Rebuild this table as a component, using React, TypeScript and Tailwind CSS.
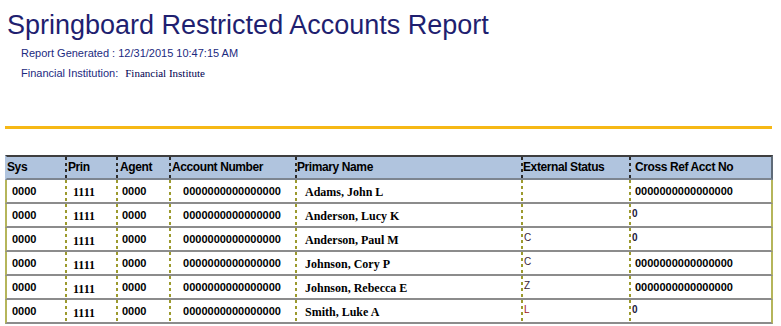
const rows = [
  { name: "Adams, John L", status: "", cross: "0000000000000000" },
  { name: "Anderson, Lucy K", status: "", cross: "0" },
  { name: "Anderson, Paul M", status: "C", cross: "0" },
  { name: "Johnson, Cory P", status: "C", cross: "0000000000000000" },
  { name: "Johnson, Rebecca E", status: "Z", cross: "0000000000000000" },
  { name: "Smith, Luke A", status: "L", cross: "0" },
];

// dashed column rule drawn as a 2px background strip on the cell's left edge
const olive =
  "bg-[repeating-linear-gradient(to_bottom,#9c9a2e_0px,#9c9a2e_3px,transparent_3px,transparent_6px)] bg-no-repeat bg-[length:2px_100%]";
const dark =
  "bg-[repeating-linear-gradient(to_bottom,#2b2b2b_0px,#2b2b2b_3px,transparent_3px,transparent_6px)] bg-no-repeat bg-[length:2px_100%]";

const sans = "font-['Liberation_Sans',Arial,sans-serif]";
const serif = "font-['Liberation_Serif','Times_New_Roman',serif]";

export default function App() {
  return (
    <div className={`min-h-screen w-[781px] bg-white pt-[12px] ${sans}`}>
      {/* Title */}
      <h1 className="ml-[7px] h-[27px] text-[27px] leading-[27px] text-[#1f1f70]">
        Springboard Restricted Accounts Report
      </h1>

      <div className="mt-[4px] pl-[21px] text-[11px] leading-[20px] text-[#1c2a80]">
        <div className="h-[20px]">Report Generated : 12/31/2015 10:47:15 AM</div>
        <div className="flex h-[20px]">
          <span>Financial Institution:</span>
          <span className={`ml-[7px] text-[11px] text-[#000050] ${serif}`}>
            Financial Institute
          </span>
        </div>
      </div>

      {/* Orange rule */}
      <div className="ml-[5px] mt-[43px] h-[3px] w-[767px] bg-[#f6b816]" />

      {/* Table */}
      <div className="ml-[5px] mt-[26px] w-[768px]">
        <div className="flex h-[25px] border-t-2 border-b-2 border-l-2 border-r-2 border-t-[#3e3e3e] border-b-[#7d8590] border-l-[#b0c4de] border-r-[#5f6b78] bg-[#b0c4de] text-[12px] font-bold tracking-[-0.4px] text-black">
          <div className="flex w-[58px] items-start pt-[1px]">Sys</div>
          <div className={`flex w-[51px] items-start pl-[3px] pt-[1px] ${dark}`}>Prin</div>
          <div className={`flex w-[53px] items-start pl-[4px] pt-[1px] ${dark}`}>Agent</div>
          <div className={`flex w-[126px] items-start pl-[3px] pt-[1px] ${dark}`}>Account Number</div>
          <div className={`flex w-[226px] items-start pl-[2px] pt-[1px] ${dark}`}>Primary Name</div>
          <div className={`flex w-[108px] items-start pl-[2px] pt-[1px] ${dark}`}>External Status</div>
          <div className={`flex w-[142px] items-start pl-[6px] pt-[1px] ${dark}`}>Cross Ref Acct No</div>
        </div>

        {rows.map((r, i) => (
          <div
            key={r.name}
            className="flex h-[24px] border-b-2 border-l-2 border-r-2 border-b-[#8c8c8c] border-l-[#b5b55a] border-r-[#b5b55a] bg-white text-black"
          >
            <div className="flex w-[58px] items-center pl-[5px] text-[11px] font-bold">0000</div>
            <div
              className={`flex w-[51px] items-center pl-[8px] text-[12px] font-bold ${
                i > 1 ? "pt-[4px]" : "pt-[2px]"
              } ${serif} ${olive}`}
            >
              1111
            </div>
            <div className={`flex w-[53px] items-center pl-[6px] text-[11px] font-bold ${olive}`}>0000</div>
            <div className={`flex w-[126px] items-center justify-center text-[11px] font-bold ${olive}`}>
              0000000000000000
            </div>
            <div className={`flex w-[226px] items-center pl-[10px] pt-[2px] text-[12px] font-bold ${serif} ${olive}`}>
              {r.name}
            </div>
            <div className={`flex w-[108px] items-start pl-[3px] pt-[3px] text-[10px] leading-[13px] ${olive}`}>
              <span className={r.status === "L" ? "text-[#a01818]" : "text-[#3a1f3a]"}>{r.status}</span>
            </div>
            <div className={`flex w-[142px] ${olive}`}>
              {r.cross.length > 1 ? (
                <span className="flex items-center pl-[6px] text-[11px] font-bold">{r.cross}</span>
              ) : (
                <span className="pl-[3px] pt-[3px] text-[10px] font-bold leading-[13px] text-[#1a1a40]">
                  {r.cross}
                </span>
              )}
            </div>
          </div>
        ))}
      </div>
    </div>
  );
}
